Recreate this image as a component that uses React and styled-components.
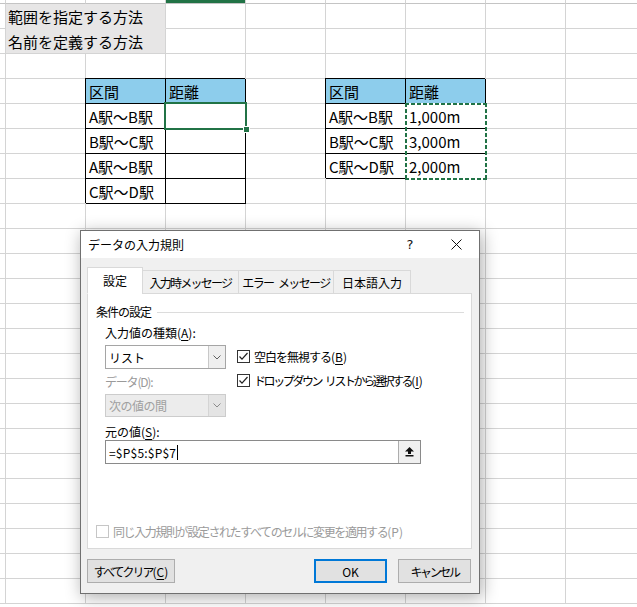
import React from 'react';
import styled, { createGlobalStyle, css } from 'styled-components';

const FONT = '"Noto Sans CJK JP", "Noto Sans", sans-serif';

const GlobalStyle = createGlobalStyle`
  html, body { margin: 0; padding: 0; background: #fff; overflow: hidden; }
  body { font-family: ${FONT}; }
`;

const Page = styled.div`
  position: relative;
  width: 637px;
  height: 607px;
  overflow: hidden;
  background: #fff;
`;

/* ---------------- Spreadsheet ---------------- */

const Sheet = styled.div`
  display: grid;
  grid-template-columns: 6px repeat(8, 80px);
  grid-template-rows: 4px repeat(24, 25px);
  font-family: ${FONT};
  font-size: 15px;
  color: #000;
`;

const GRID = '#d4d4d4';

const StripCell = styled.div`
  grid-row: 1;
  grid-column: ${(p) => p.$col};
  box-sizing: border-box;
  border-right: 1px solid ${GRID};
  border-bottom: 1px solid #c4c4c4;
  background: ${(p) => (p.$active ? '#217346' : '#fff')};
`;

const Cell = styled.div`
  grid-row: ${(p) => p.$row};
  grid-column: ${(p) => p.$col} / span ${(p) => p.$span || 1};
  box-sizing: border-box;
  display: flex;
  align-items: center;
  padding-left: 3px;
  white-space: nowrap;
  border-right: 1px solid ${GRID};
  border-bottom: 1px solid ${GRID};
  background: #fff;
  ${(p) =>
    p.$kind === 'gray' &&
    css`
      background: #e7e6e6;
      padding-left: 2px;
      border-bottom-color: ${p.$hideBottom ? '#e7e6e6' : GRID};
    `}
  ${(p) =>
    (p.$kind === 'table' || p.$kind === 'head') &&
    css`
      border-right-color: #000;
      border-bottom-color: #000;
      box-shadow: -1px -1px 0 0 #000;
      background: ${p.$kind === 'head' ? '#8dcdec' : '#fff'};
    `}
`;

const SliverCell = styled.div`
  grid-row: ${(p) => p.$row};
  grid-column: 1;
  box-sizing: border-box;
  border-right: 1px solid ${GRID};
  border-bottom: 1px solid ${GRID};
`;

const Selection = styled.div`
  grid-row: ${(p) => p.$row};
  grid-column: ${(p) => p.$col};
  margin: -2px -1px -1px -2px;
  border: 2px solid #217346;
  position: relative;
  pointer-events: none;
  &::after {
    content: '';
    position: absolute;
    right: -4px;
    bottom: -4px;
    width: 5px;
    height: 5px;
    background: #217346;
    box-shadow: 0 0 0 1px #fff;
  }
`;

const Ants = styled.div`
  grid-row: ${(p) => p.$row} / span ${(p) => p.$span};
  grid-column: ${(p) => p.$col};
  margin: -1px -1px -1px -1px;
  pointer-events: none;
  background:
    linear-gradient(90deg, #217346 4px, #fff 0) 0 0 / 6px 2px repeat-x,
    linear-gradient(90deg, #217346 4px, #fff 0) 0 100% / 6px 2px repeat-x,
    linear-gradient(180deg, #217346 4px, #fff 0) 0 0 / 2px 6px repeat-y,
    linear-gradient(180deg, #217346 4px, #fff 0) 100% 0 / 2px 6px repeat-y;
`;

const cellData = {
  '1-1': { text: '範囲を指定する方法', span: 2, kind: 'gray', hideBottom: true },
  '2-1': { text: '名前を定義する方法', span: 2, kind: 'gray' },
  '4-2': { text: '区間', kind: 'head' },
  '4-3': { text: '距離', kind: 'head' },
  '4-5': { text: '区間', kind: 'head' },
  '4-6': { text: '距離', kind: 'head' },
  '5-2': { text: 'A駅〜B駅', kind: 'table' },
  '5-3': { kind: 'table' },
  '5-5': { text: 'A駅〜B駅', kind: 'table' },
  '5-6': { text: '1,000m', kind: 'table' },
  '6-2': { text: 'B駅〜C駅', kind: 'table' },
  '6-3': { kind: 'table' },
  '6-5': { text: 'B駅〜C駅', kind: 'table' },
  '6-6': { text: '3,000m', kind: 'table' },
  '7-2': { text: 'A駅〜B駅', kind: 'table' },
  '7-3': { kind: 'table' },
  '7-5': { text: 'C駅〜D駅', kind: 'table' },
  '7-6': { text: '2,000m', kind: 'table' },
  '8-2': { text: 'C駅〜D駅', kind: 'table' },
  '8-3': { kind: 'table' },
};

function Spreadsheet() {
  const items = [];
  items.push(<StripCell key="s0" $col={1} />);
  for (let c = 1; c <= 8; c++) {
    items.push(<StripCell key={`s${c}`} $col={c + 1} $active={c === 3} />);
  }
  for (let r = 1; r <= 24; r++) {
    items.push(<SliverCell key={`l${r}`} $row={r + 1} />);
    let c = 1;
    while (c <= 8) {
      const d = cellData[`${r}-${c}`] || {};
      const span = d.span || 1;
      items.push(
        <Cell
          key={`${r}-${c}`}
          $row={r + 1}
          $col={c + 1}
          $span={span}
          $kind={d.kind}
          $hideBottom={d.hideBottom}
        >
          {d.text}
        </Cell>
      );
      c += span;
    }
  }
  return (
    <Sheet>
      {items}
      <Selection $row={6} $col={4} />
      <Ants $row={6} $span={3} $col={7} />
    </Sheet>
  );
}

/* ---------------- Dialog ---------------- */

const Dialog = styled.div`
  position: absolute;
  left: 80px;
  top: 230px;
  z-index: 5;
  width: 400px;
  height: 364px;
  box-sizing: border-box;
  border: 1px solid #707070;
  background: #f0f0f0;
  box-shadow: 2px 3px 16px rgba(0, 0, 0, 0.33);
  display: flex;
  flex-direction: column;
  font-family: ${FONT};
  font-size: 12px;
  color: #000;
`;

const TitleBar = styled.div`
  flex: none;
  height: 27px;
  background: #fff;
  display: flex;
  align-items: center;
  padding-left: 7px;
`;

const Title = styled.div`
  flex: 1;
  font-size: 12px;
`;

const TitleButton = styled.div`
  width: 46px;
  height: 27px;
  display: flex;
  align-items: center;
  justify-content: center;
  font-size: 13px;
  font-family: "DejaVu Sans", sans-serif;
  color: #111;
`;

const Body = styled.div`
  flex: 1;
  display: flex;
  flex-direction: column;
  padding: 9px 7px 10px 6px;
`;

const TabRow = styled.div`
  display: flex;
  align-items: flex-end;
  height: 27px;
  margin-bottom: -1px;
  position: relative;
  z-index: 1;
`;

const Tab = styled.div`
  box-sizing: border-box;
  width: ${(p) => p.$w}px;
  height: ${(p) => (p.$selected ? 27 : 24)}px;
  border: 1px solid #d9d9d9;
  border-bottom-color: ${(p) => (p.$selected ? '#fff' : '#d9d9d9')};
  background: ${(p) => (p.$selected ? '#fff' : '#f0f0f0')};
  display: flex;
  align-items: center;
  justify-content: center;
  letter-spacing: ${(p) => p.$ls || 0}px;
  white-space: pre;
  & + & {
    margin-left: -1px;
  }
`;

const Panel = styled.div`
  height: 256px;
  box-sizing: border-box;
  border: 1px solid #d9d9d9;
  background: #fff;
  display: flex;
  flex-direction: column;
  padding: 10px 7px 7px 8px;
`;

const GroupHeader = styled.div`
  display: flex;
  align-items: center;
  height: 16px;
  line-height: 16px;
  letter-spacing: -1px;
  &::after {
    content: '';
    flex: 1;
    height: 1px;
    background: #dcdcdc;
    margin-left: 6px;
  }
`;

const FormArea = styled.div`
  padding-left: 9px;
  display: flex;
  flex-direction: column;
`;

const Label = styled.div`
  height: 16px;
  line-height: 16px;
  margin-top: ${(p) => p.$mt || 0}px;
  color: ${(p) => (p.$disabled ? '#9a9a9a' : '#000')};
  letter-spacing: ${(p) => p.$ls || 0}px;
  white-space: nowrap;
  u {
    text-underline-offset: 2px;
  }
`;

const TwoCol = styled.div`
  display: flex;
  margin-top: 4px;
  gap: 11px;
`;

const LeftCol = styled.div`
  width: 121px;
  display: flex;
  flex-direction: column;
`;

const RightCol = styled.div`
  display: flex;
  flex-direction: column;
  gap: 4px;
  padding-top: 1px;
`;

const Select = styled.div`
  box-sizing: border-box;
  height: ${(p) => (p.$disabled ? 23 : 24)}px;
  margin-top: ${(p) => p.$mt || 0}px;
  border: 1px solid ${(p) => (p.$disabled ? '#cccccc' : '#a5a5a5')};
  background: ${(p) => (p.$disabled ? '#ececec' : '#fff')};
  color: ${(p) => (p.$disabled ? '#a0a0a0' : '#000')};
  display: flex;
  align-items: stretch;
`;

const SelectText = styled.div`
  flex: 1;
  display: flex;
  align-items: center;
  padding-left: 3px;
  letter-spacing: ${(p) => p.$ls || 0}px;
`;

const SelectArrow = styled.div`
  width: 16px;
  border-left: 1px solid ${(p) => (p.$disabled ? '#d4d4d4' : '#c8c8c8')};
  background: ${(p) => (p.$disabled ? '#e4e4e4' : '#efefef')};
  display: flex;
  align-items: center;
  justify-content: center;
`;

const CheckRow = styled.div`
  display: flex;
  align-items: center;
  height: 20px;
  gap: 4px;
  color: ${(p) => (p.$disabled ? '#9a9a9a' : '#000')};
  white-space: pre;
`;

const CheckText = styled.span`
  letter-spacing: ${(p) => p.$ls || 0}px;
`;

const Paren = styled.span`
  letter-spacing: 0;
  u {
    text-underline-offset: 2px;
  }
`;

const CheckBox = styled.div`
  box-sizing: border-box;
  width: 13px;
  height: 13px;
  flex: none;
  border: 1px solid ${(p) => (p.$disabled ? '#c6c6c6' : '#333')};
  background: #fff;
  display: flex;
  align-items: center;
  justify-content: center;
`;

const SourceInput = styled.div`
  box-sizing: border-box;
  width: 316px;
  height: 24px;
  border: 1px solid #8a8a8a;
  background: #fff;
  display: flex;
  align-items: stretch;
`;

const SourceText = styled.div`
  flex: 1;
  display: flex;
  align-items: center;
  padding-left: 3px;
  letter-spacing: 0.2px;
`;

const Caret = styled.span`
  display: inline-block;
  width: 1px;
  height: 15px;
  background: #000;
  margin-left: 1px;
`;

const CollapseButton = styled.div`
  width: 21px;
  border-left: 1px solid #adadad;
  background: #f0f0f0;
  display: flex;
  align-items: center;
  justify-content: center;
`;

const Spacer = styled.div`
  flex: 1;
`;

const ButtonRow = styled.div`
  display: flex;
  margin-top: 10px;
  height: 24px;
  gap: 11px;
  padding-right: 1px;
`;

const Button = styled.div`
  box-sizing: border-box;
  width: ${(p) => p.$w}px;
  height: 24px;
  border: ${(p) => (p.$default ? '2px solid #0078d7' : '1px solid #adadad')};
  background: #e1e1e1;
  display: flex;
  align-items: center;
  justify-content: center;
  white-space: nowrap;
`;

const Chevron = ({ color = '#606060' }) => (
  <svg width="8" height="5" viewBox="0 0 8 5">
    <polyline points="0.5,0.5 4,4 7.5,0.5" fill="none" stroke={color} strokeWidth="1" />
  </svg>
);

const Check = () => (
  <svg width="11" height="11" viewBox="0 0 11 11">
    <polyline points="1.5,5.5 4,8.2 9.5,2" fill="none" stroke="#222" strokeWidth="1.2" />
  </svg>
);

const CloseIcon = () => (
  <svg width="11" height="11" viewBox="0 0 11 11">
    <path d="M0.5 0.5 L10.5 10.5 M10.5 0.5 L0.5 10.5" stroke="#111" strokeWidth="1" />
  </svg>
);

const UpArrowIcon = () => (
  <svg width="9" height="10" viewBox="0 0 9 10">
    <path d="M4.5 0 L9 4.5 L6 4.5 L6 7 L3 7 L3 4.5 L0 4.5 Z" fill="#111" />
    <rect x="0.5" y="8" width="8" height="1.5" fill="#111" />
  </svg>
);

function ValidationDialog() {
  return (
    <Dialog>
      <TitleBar>
        <Title>データの入力規則</Title>
        <TitleButton>?</TitleButton>
        <TitleButton>
          <CloseIcon />
        </TitleButton>
      </TitleBar>
      <Body>
        <TabRow>
          <Tab $w={56} $selected>設定</Tab>
          <Tab $w={97} $ls={-1.75}>入力時メッセージ</Tab>
          <Tab $w={96} $ls={-1.6}>{'エラー\u2002メッセージ'}</Tab>
          <Tab $w={78}>日本語入力</Tab>
        </TabRow>
        <Panel>
          <GroupHeader>条件の設定</GroupHeader>
          <FormArea>
            <Label $mt={5}>
              入力値の種類(<u>A</u>):
            </Label>
            <TwoCol>
              <LeftCol>
                <Select>
                  <SelectText>リスト</SelectText>
                  <SelectArrow>
                    <Chevron />
                  </SelectArrow>
                </Select>
                <Label $mt={5} $disabled $ls={-1.2}>
                  データ(D):
                </Label>
                <Select $disabled $mt={4}>
                  <SelectText $ls={-0.5}>次の値の間</SelectText>
                  <SelectArrow $disabled>
                    <Chevron color="#8a8a8a" />
                  </SelectArrow>
                </Select>
              </LeftCol>
              <RightCol>
                <CheckRow>
                  <CheckBox>
                    <Check />
                  </CheckBox>
                  <CheckText $ls={-1}>
                    空白を無視する
                    <Paren>
                      (<u>B</u>)
                    </Paren>
                  </CheckText>
                </CheckRow>
                <CheckRow>
                  <CheckBox>
                    <Check />
                  </CheckBox>
                  <CheckText $ls={-2.4}>
                    {'ドロップダウン\u2002リストから選択する'}
                    <Paren>
                      (<u>I</u>)
                    </Paren>
                  </CheckText>
                </CheckRow>
              </RightCol>
            </TwoCol>
            <Label $mt={7}>
              元の値(<u>S</u>):
            </Label>
            <SourceInput>
              <SourceText>
                =$P$5:$P$7
                <Caret />
              </SourceText>
              <CollapseButton>
                <UpArrowIcon />
              </CollapseButton>
            </SourceInput>
          </FormArea>
          <Spacer />
          <CheckRow $disabled>
            <CheckBox $disabled />
            <CheckText $ls={-1.4}>
              同じ入力規則が設定されたすべてのセルに変更を適用する
              <Paren>(P)</Paren>
            </CheckText>
          </CheckRow>
        </Panel>
        <ButtonRow>
          <Button $w={88}>
            <CheckText $ls={-2}>
              すべてクリア
              <Paren>
                (<u>C</u>)
              </Paren>
            </CheckText>
          </Button>
          <Spacer />
          <Button $w={73} $default>
            OK
          </Button>
          <Button $w={73}>
            <CheckText $ls={-2.4}>キャンセル</CheckText>
          </Button>
        </ButtonRow>
      </Body>
    </Dialog>
  );
}

export default function App() {
  return (
    <>
      <GlobalStyle />
      <Page>
        <Spreadsheet />
        <ValidationDialog />
      </Page>
    </>
  );
}
